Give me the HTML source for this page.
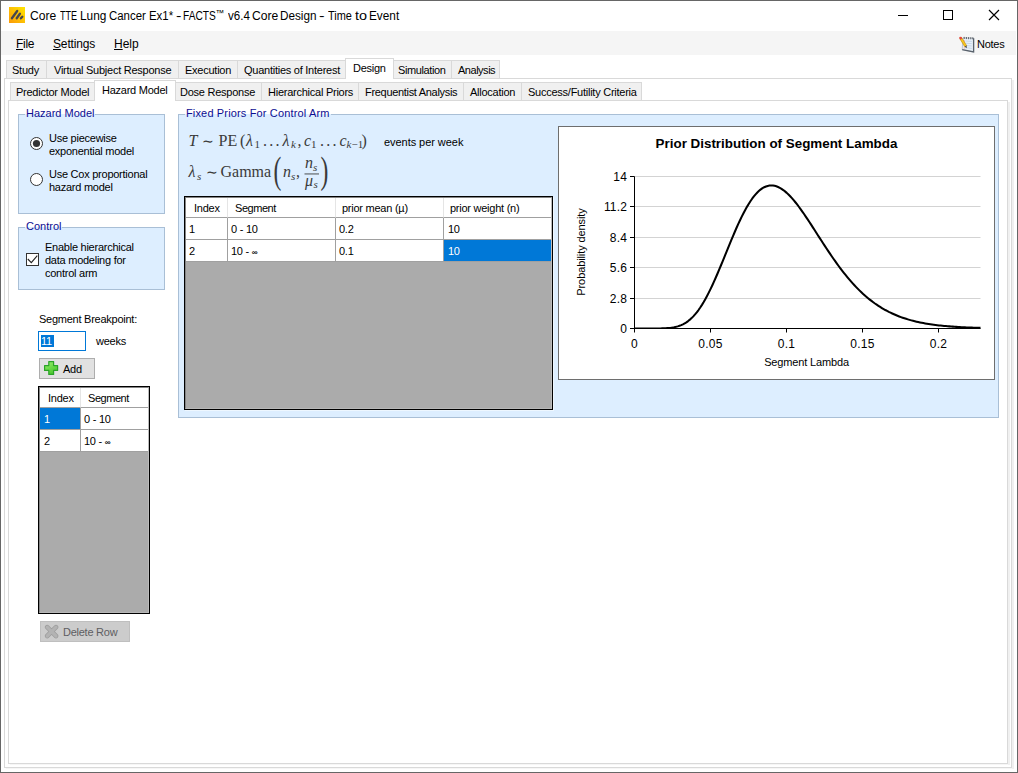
<!DOCTYPE html>
<html><head><meta charset="utf-8"><title>FACTS</title>
<style>
html,body{margin:0;padding:0;}
body{width:1018px;height:773px;position:relative;overflow:hidden;background:#fff;font-family:"Liberation Sans",sans-serif;font-size:11px;color:#000;letter-spacing:-0.25px;}
.a{position:absolute;white-space:nowrap;line-height:13px;}
.t{margin-top:1px;}
.box{position:absolute;box-sizing:border-box;}
.tab{position:absolute;box-sizing:border-box;background:#f0f0f0;border:1px solid #d9d9d9;border-bottom:none;height:18px;line-height:19px;text-align:left;white-space:nowrap;}
.tab.sel{background:#fff;height:21px;}
.grp{position:absolute;box-sizing:border-box;background:#ddeeff;border:1px solid #a9bfd6;}
.grpl{letter-spacing:0;position:absolute;margin-top:1px;background:linear-gradient(#fff 0,#fff 7px,#ddeeff 7px);color:#0d0d92;padding:0 1px;line-height:13px;white-space:nowrap;}
.seg{font-family:"Liberation Sans",sans-serif;font-size:12px;letter-spacing:-0.3px;}
.w{position:absolute;white-space:nowrap;line-height:16px;transform-origin:0 0;letter-spacing:0;display:inline-block;}
.cell{position:absolute;box-sizing:border-box;background:#fff;line-height:13px;white-space:nowrap;}
</style></head>
<body>
<!-- window border -->
<div class="box" style="left:0;top:0;width:1018px;height:773px;border:1px solid #666;"></div>

<!-- title bar -->
<svg class="a" style="left:9px;top:7px" width="16" height="16" viewBox="0 0 16 16">
<defs><linearGradient id="ig" x1="1" y1="0" x2="0" y2="1"><stop offset="0" stop-color="#ffe600"/><stop offset="1" stop-color="#fb9a08"/></linearGradient></defs>
<rect width="16" height="16" fill="url(#ig)"/>
<g stroke="#46464f" stroke-width="2.3" stroke-linecap="round"><line x1="2.9" y1="11.2" x2="8.2" y2="4"/><line x1="7.7" y1="11.2" x2="10.9" y2="6.8"/><line x1="11.9" y1="11.3" x2="13.3" y2="9.8"/></g>
</svg>
<div class="seg" id="title">
<span class="w" style="left:29.59px;top:8px;transform:scaleX(1.0083);">Core</span>
<span class="w" style="left:59.80px;top:8px;transform:scaleX(0.7545);">TTE</span>
<span class="w" style="left:79.51px;top:8px;transform:scaleX(0.9880);">Lung</span>
<span class="w" style="left:108.95px;top:8px;transform:scaleX(0.9526);">Cancer</span>
<span class="w" style="left:148.85px;top:8px;transform:scaleX(0.9500);">Ex1*</span>
<span class="w" style="left:175.6px;top:8px;transform:scaleX(1.35);">-</span>
<span class="w" style="left:182.75px;top:8px;transform:scaleX(0.8459);">FACTS</span>
<span class="w" style="left:228.30px;top:8px;transform:scaleX(0.9636);">v6.4</span>
<span class="w" style="left:252.0px;top:8px;transform:scaleX(1.0100);">Core</span>
<span class="w" style="left:279.52px;top:8px;transform:scaleX(0.9778);">Design</span>
<span class="w" style="left:319.1px;top:8px;transform:scaleX(1.4);">-</span>
<span class="w" style="left:327.50px;top:8px;transform:scaleX(0.9115);">Time</span>
<span class="w" style="left:355px;top:8px;transform:scaleX(1.2);">to</span>
<span class="w" style="left:369.32px;top:8px;transform:scaleX(0.9828);">Event</span>
<span class="w" style="left:215.5px;top:5px;font-size:8.5px;letter-spacing:0;">™</span>
</div>
<svg class="a" style="left:890px;top:1px" width="126" height="30" viewBox="0 0 126 30" fill="none" stroke="#000" stroke-width="1">
<line x1="8" y1="14.5" x2="18" y2="14.5"/>
<rect x="53.5" y="9.5" width="9" height="9"/>
<path d="M99 9 L109 19 M109 9 L99 19" stroke-width="1.15"/>
</svg>

<!-- menu bar -->
<div class="box" style="left:1px;top:31px;width:1015px;height:24px;background:#f5f5f5;"></div>
<div class="a seg" style="left:16px;top:36px;line-height:16px;"><u>F</u>ile</div>
<div class="a seg" style="left:53px;top:36px;line-height:16px;letter-spacing:-0.15px;"><u>S</u>ettings</div>
<div class="a seg" style="left:114px;top:36px;line-height:16px;letter-spacing:0;"><u>H</u>elp</div>
<svg class="a" style="left:958px;top:36px" width="18" height="18" viewBox="0 0 18 18">
<path d="M5 1.8 L15.6 2.2 L15.6 16 L4.2 13.6 Z" fill="#e9f0f7" stroke="#aab4be" stroke-width="0.7"/>
<path d="M15.6 2.2 L15.6 16 L4.2 13.6" fill="none" stroke="#59626c" stroke-width="1.3"/>
<path d="M7.6 5 L13.8 5.4 M7.5 7.2 L13.8 7.7 M7.4 9.4 L13.8 10 M7.3 11.6 L13.8 12.4" stroke="#bcd0e6" stroke-width="0.8"/>
<path d="M6.2 0.9 V3 M8.4 1 V3.1 M10.6 1.1 V3.2 M12.8 1.2 V3.3 M14.8 1.3 V3.3" stroke="#5a5f66" stroke-width="1"/>
<path d="M6.6 4 L6.2 13.2" stroke="#e9a0a0" stroke-width="0.6"/>
<path d="M2 3 L3.9 1.9 L8.6 9.6 L6.8 10.8 Z" fill="#fbc81a" stroke="#b8860b" stroke-width="0.6"/>
<circle cx="2.6" cy="2.1" r="1.45" fill="#e0483a"/>
<path d="M6.8 10.8 L8.6 9.6 L8.7 12.2 Z" fill="#3a3a3a"/>
</svg>
<div class="a" style="left:977px;top:38px;">Notes</div>

<!-- outer tab control -->
<div class="box" style="left:4px;top:78px;width:1008px;height:690px;border:1px solid #d9d9d9;"></div>
<div class="box" style="left:1012px;top:80px;width:2px;height:689px;background:#f0f0f0;"></div>
<div class="box" style="left:6px;top:768px;width:1006px;height:1px;background:#f6f6f6;"></div>
<div class="tab" style="left:6px;top:60px;width:41px;padding-left:5px;">Study</div>
<div class="tab" style="left:46px;top:60px;width:133px;padding-left:7px;">Virtual Subject Response</div>
<div class="tab" style="left:178px;top:60px;width:60px;padding-left:6px;">Execution</div>
<div class="tab" style="left:237px;top:60px;width:110px;padding-left:6px;">Quantities of Interest</div>
<div class="tab" style="left:393px;top:60px;width:59px;padding-left:4px;letter-spacing:-0.4px;">Simulation</div>
<div class="tab" style="left:451px;top:60px;width:49px;padding-left:6px;border-right:1px solid #d9d9d9;letter-spacing:-0.48px;">Analysis</div>
<div class="tab sel" style="left:345px;top:58px;width:49px;padding-left:7px;line-height:18px;">Design</div>

<!-- inner tab control -->
<div class="box" style="left:8px;top:100px;width:1000px;height:664px;border:1px solid #d9d9d9;"></div>
<div class="box" style="left:1008px;top:102px;width:2px;height:663px;background:#f0f0f0;"></div>
<div class="box" style="left:10px;top:764px;width:998px;height:1px;background:#f6f6f6;"></div>
<div class="tab" style="left:10px;top:82px;width:86px;padding-left:5px;">Predictor Model</div>
<div class="tab" style="left:174px;top:82px;width:88px;padding-left:5px;">Dose Response</div>
<div class="tab" style="left:261px;top:82px;width:98px;padding-left:6px;">Hierarchical Priors</div>
<div class="tab" style="left:358px;top:82px;width:106px;padding-left:6px;letter-spacing:-0.31px;">Frequentist Analysis</div>
<div class="tab" style="left:463px;top:82px;width:59px;padding-left:6px;">Allocation</div>
<div class="tab" style="left:521px;top:82px;width:121px;padding-left:6px;border-right:1px solid #d9d9d9;">Success/Futility Criteria</div>
<div class="tab sel" style="left:94px;top:80px;width:82px;padding-left:7px;line-height:18px;">Hazard Model</div>

<!-- Hazard Model group -->
<div class="grp" style="left:18px;top:114px;width:147px;height:100px;"></div>
<div class="grpl" style="left:25px;top:106px;">Hazard Model</div>
<svg class="a" style="left:29px;top:136px" width="15" height="15"><circle cx="7.5" cy="7.5" r="6" fill="#fff" stroke="#333" stroke-width="1"/><circle cx="7.5" cy="7.5" r="3.6" fill="#333"/></svg>
<div class="a t" style="left:49px;top:131px;">Use piecewise<br>exponential model</div>
<svg class="a" style="left:29px;top:172px" width="15" height="15"><circle cx="7.5" cy="7.5" r="6" fill="#fff" stroke="#333" stroke-width="1"/></svg>
<div class="a t" style="left:49px;top:167px;">Use Cox proportional<br>hazard model</div>

<!-- Control group -->
<div class="grp" style="left:18px;top:227px;width:147px;height:63px;"></div>
<div class="grpl" style="left:25px;top:219px;">Control</div>
<div class="box" style="left:26px;top:253px;width:13px;height:13px;background:#fff;border:1px solid #333;"></div>
<svg class="a" style="left:26px;top:253px" width="13" height="13" fill="none" stroke="#222" stroke-width="1.1"><path d="M1.8 6 L5.3 9.6 L11.3 2.6"/></svg>
<div class="a t" style="left:45px;top:240px;">Enable hierarchical<br>data modeling for<br>control arm</div>

<!-- Segment Breakpoint -->
<div class="a t" style="left:39px;top:312px;">Segment Breakpoint:</div>
<div class="box" style="left:38px;top:331px;width:48px;height:20px;background:#fff;border:1px solid #0078d7;"></div>
<div class="a" style="left:41px;top:335px;width:12.5px;height:12px;background:#0078d7;color:#fff;box-sizing:border-box;line-height:13px;">11</div>
<div class="a t" style="left:96px;top:334px;">weeks</div>

<!-- Add button -->
<div class="box" style="left:39px;top:358px;width:56px;height:21px;background:#e1e1e1;border:1px solid #adadad;"></div>
<svg class="a" style="left:44px;top:361px" width="15" height="15" viewBox="0 0 15 15">
<defs><linearGradient id="pg" x1="0" y1="0" x2="0.6" y2="1"><stop offset="0" stop-color="#a4f07c"/><stop offset="0.5" stop-color="#6fdc4a"/><stop offset="1" stop-color="#48c62e"/></linearGradient></defs>
<path d="M4.8 0.6 H9.6 V4.6 H13.6 V9.4 H9.6 V13.4 H4.8 V9.4 H0.6 V4.6 H4.8 Z" fill="url(#pg)" stroke="#2ba328" stroke-width="1.2" stroke-linejoin="round"/>
</svg>
<div class="a t" style="left:63px;top:362px;">Add</div>

<!-- small grid -->
<div class="box" style="left:38px;top:386px;width:112px;height:228px;background:#ababab;border:1px solid #000;"></div>
<div class="box" style="left:39px;top:387px;width:110px;height:226px;border:1px solid;border-color:#858585 #bcbcbc #b8b8b8 #858585;"></div>
<div class="cell" style="left:40px;top:388px;width:41px;height:20px;border-right:1px solid #e5e5e5;border-bottom:1px solid #a0a0a0;padding:4px 0 0 8px;">Index</div>
<div class="cell" style="left:81px;top:388px;width:67px;height:20px;border-bottom:1px solid #a0a0a0;padding:4px 0 0 7px;letter-spacing:-0.45px;">Segment</div>
<div class="cell" style="left:40px;top:408px;width:41px;height:22px;border-right:1px solid #a0a0a0;border-bottom:1px solid #a0a0a0;padding:5px 0 0 4px;background:#0078d7;color:#fff;background-clip:padding-box;">1</div>
<div class="cell" style="left:81px;top:408px;width:67px;height:22px;border-bottom:1px solid #a0a0a0;padding:5px 0 0 3px;">0 - 10</div>
<div class="cell" style="left:40px;top:430px;width:41px;height:22px;border-right:1px solid #a0a0a0;border-bottom:1px solid #a0a0a0;padding:5px 0 0 4px;">2</div>
<div class="cell" style="left:81px;top:430px;width:67px;height:22px;border-bottom:1px solid #a0a0a0;padding:5px 0 0 3px;">10 - <span style="font-size:8px;font-weight:bold;letter-spacing:0">∞</span></div>

<!-- Delete Row button -->
<div class="box" style="left:40px;top:621px;width:90px;height:21px;background:#cccccc;border:1px solid #bfbfbf;"></div>
<svg class="a" style="left:44px;top:624px" width="16" height="16" viewBox="0 0 16 16" stroke-linecap="round">
<path d="M3.2 3.2 L12 12 M12 3.2 L3.2 12" stroke="#9c9c9c" stroke-width="4.6"/>
<path d="M3.2 3.2 L12 12 M12 3.2 L3.2 12" stroke="#b3b3b3" stroke-width="3.2"/>
</svg>
<div class="a t" style="left:63px;top:625px;color:#5e5e62;">Delete Row</div>

<!-- Fixed Priors group -->
<div class="grp" style="left:178px;top:114px;width:821px;height:304px;"></div>
<div class="grpl" style="left:185px;top:106px;letter-spacing:0.15px;">Fixed Priors For Control Arm</div>

<!-- formulas -->
<svg class="a" style="left:184px;top:126px" width="200" height="70" viewBox="0 0 200 70" fill="#3a3a3a" font-family="'Liberation Serif',serif" font-size="16" letter-spacing="0">
<text x="4.5" y="19.6" font-style="italic">T</text>
<text x="18" y="19.6" font-size="14">∼</text>
<text x="34.5" y="19.6">PE</text>
<text x="56" y="19.6">(</text>
<text x="62" y="19.6" font-style="italic">λ</text><text x="70.5" y="22" font-size="11">1</text>
<text x="79" y="19.6" letter-spacing="2.3">...</text>
<text x="98.5" y="19.6" font-style="italic">λ</text><text x="107" y="22" font-size="11" font-style="italic">k</text>
<text x="113.5" y="19.6">,</text>
<text x="120" y="19.6" font-style="italic">c</text><text x="127" y="22" font-size="11">1</text>
<text x="136" y="19.6" letter-spacing="2.3">...</text>
<text x="155.5" y="19.6" font-style="italic">c</text><text x="162.5" y="22" font-size="11" font-style="italic">k</text><text x="167.5" y="22" font-size="11">−1</text>
<text x="177.5" y="19.6">)</text>
<text x="4.5" y="51" font-style="italic">λ</text><text x="13" y="53.5" font-size="11" font-style="italic">s</text>
<text x="22" y="51" font-size="14">∼</text>
<text x="36.5" y="51">Gamma</text>
<text transform="translate(89.5,56.7) scale(0.62,1)" x="0" y="0" font-size="38">(</text>
<text x="99" y="51" font-style="italic">n</text><text x="107" y="53.5" font-size="11" font-style="italic">s</text>
<text x="112" y="51">,</text>
<text x="121" y="42" font-style="italic">n</text><text x="129" y="44.5" font-size="11" font-style="italic">s</text>
<rect x="120.5" y="47.5" width="14.5" height="0.9"/>
<text x="121" y="59.5" font-style="italic">μ</text><text x="129.5" y="62" font-size="11" font-style="italic">s</text>
<text transform="translate(136.5,56.7) scale(0.62,1)" x="0" y="0" font-size="38">)</text>
</svg>
<div class="a t" style="left:384px;top:135px;letter-spacing:-0.05px;">events per week</div>

<!-- main grid -->
<div class="box" style="left:184px;top:196px;width:369px;height:214px;background:#ababab;border:1px solid #000;"></div>
<div class="box" style="left:185px;top:197px;width:367px;height:212px;border:1px solid;border-color:#858585 #bcbcbc #b8b8b8 #858585;"></div>
<div class="box" style="left:553px;top:197px;width:1px;height:214px;background:#eef7ff;"></div>
<div class="box" style="left:185px;top:410px;width:369px;height:1px;background:#eef7ff;"></div>
<div class="cell" style="left:186px;top:198px;width:42px;height:20px;border-right:1px solid #e5e5e5;border-bottom:1px solid #a0a0a0;padding:4px 0 0 8px;">Index</div>
<div class="cell" style="left:228px;top:198px;width:108px;height:20px;border-right:1px solid #e5e5e5;border-bottom:1px solid #a0a0a0;padding:4px 0 0 7px;letter-spacing:-0.45px;">Segment</div>
<div class="cell" style="left:336px;top:198px;width:108px;height:20px;border-right:1px solid #e5e5e5;border-bottom:1px solid #a0a0a0;padding:4px 0 0 6px;">prior mean (µ)</div>
<div class="cell" style="left:444px;top:198px;width:107px;height:20px;border-bottom:1px solid #a0a0a0;padding:4px 0 0 6px;">prior weight (n)</div>

<div class="cell" style="left:186px;top:218px;width:42px;height:22px;border-right:1px solid #a0a0a0;border-bottom:1px solid #a0a0a0;padding:5px 0 0 3px;">1</div>
<div class="cell" style="left:228px;top:218px;width:108px;height:22px;border-right:1px solid #a0a0a0;border-bottom:1px solid #a0a0a0;padding:5px 0 0 3px;">0 - 10</div>
<div class="cell" style="left:336px;top:218px;width:108px;height:22px;border-right:1px solid #a0a0a0;border-bottom:1px solid #a0a0a0;padding:5px 0 0 3px;">0.2</div>
<div class="cell" style="left:444px;top:218px;width:107px;height:22px;border-bottom:1px solid #a0a0a0;padding:5px 0 0 4px;">10</div>

<div class="cell" style="left:186px;top:240px;width:42px;height:22px;border-right:1px solid #a0a0a0;border-bottom:1px solid #a0a0a0;padding:5px 0 0 3px;">2</div>
<div class="cell" style="left:228px;top:240px;width:108px;height:22px;border-right:1px solid #a0a0a0;border-bottom:1px solid #a0a0a0;padding:5px 0 0 3px;">10 - <span style="font-size:8px;font-weight:bold;letter-spacing:0">∞</span></div>
<div class="cell" style="left:336px;top:240px;width:108px;height:22px;border-right:1px solid #a0a0a0;border-bottom:1px solid #a0a0a0;padding:5px 0 0 3px;">0.1</div>
<div class="cell" style="left:444px;top:240px;width:107px;height:22px;border-bottom:1px solid #a0a0a0;padding:5px 0 0 4px;background:#0078d7;color:#fff;background-clip:padding-box;">10</div>

<!-- chart -->
<div class="box" style="left:558px;top:126px;width:437px;height:254px;background:#fff;border:1px solid #6e6e6e;"></div>
<svg class="a" id="chart" style="left:558px;top:126px" width="437" height="254" viewBox="558 126 437 254" font-family="'Liberation Sans',sans-serif" font-size="12">
<line x1="634.5" y1="298.5" x2="980.5" y2="298.5" stroke="#d3d3d3" stroke-width="1"/>
<line x1="634.5" y1="267.5" x2="980.5" y2="267.5" stroke="#d3d3d3" stroke-width="1"/>
<line x1="634.5" y1="237.5" x2="980.5" y2="237.5" stroke="#d3d3d3" stroke-width="1"/>
<line x1="634.5" y1="206.5" x2="980.5" y2="206.5" stroke="#d3d3d3" stroke-width="1"/>
<line x1="634.5" y1="176.5" x2="980.5" y2="176.5" stroke="#d3d3d3" stroke-width="1"/>
<line x1="634.5" y1="176.5" x2="634.5" y2="329.0" stroke="#000" stroke-width="1"/>
<line x1="634.0" y1="328.5" x2="980.5" y2="328.5" stroke="#000" stroke-width="1"/>
<line x1="630.0" y1="328.5" x2="634.5" y2="328.5" stroke="#000" stroke-width="1"/>
<text x="627.0" y="332.5" text-anchor="end" letter-spacing="0.15">0</text>
<line x1="630.0" y1="298.5" x2="634.5" y2="298.5" stroke="#000" stroke-width="1"/>
<text x="627.0" y="302.5" text-anchor="end" letter-spacing="0.15">2.8</text>
<line x1="630.0" y1="267.5" x2="634.5" y2="267.5" stroke="#000" stroke-width="1"/>
<text x="627.0" y="271.5" text-anchor="end" letter-spacing="0.15">5.6</text>
<line x1="630.0" y1="237.5" x2="634.5" y2="237.5" stroke="#000" stroke-width="1"/>
<text x="627.0" y="241.5" text-anchor="end" letter-spacing="0.15">8.4</text>
<line x1="630.0" y1="206.5" x2="634.5" y2="206.5" stroke="#000" stroke-width="1"/>
<text x="627.0" y="210.5" text-anchor="end" letter-spacing="0.15">11.2</text>
<line x1="630.0" y1="176.5" x2="634.5" y2="176.5" stroke="#000" stroke-width="1"/>
<text x="627.0" y="180.5" text-anchor="end" letter-spacing="0.15">14</text>
<line x1="634.5" y1="328.5" x2="634.5" y2="332.5" stroke="#000" stroke-width="1"/>
<text x="634.5" y="347.5" text-anchor="middle" letter-spacing="0.3">0</text>
<line x1="710.5" y1="328.5" x2="710.5" y2="332.5" stroke="#000" stroke-width="1"/>
<text x="710.5" y="347.5" text-anchor="middle" letter-spacing="0.3">0.05</text>
<line x1="786.5" y1="328.5" x2="786.5" y2="332.5" stroke="#000" stroke-width="1"/>
<text x="786.5" y="347.5" text-anchor="middle" letter-spacing="0.3">0.1</text>
<line x1="862.5" y1="328.5" x2="862.5" y2="332.5" stroke="#000" stroke-width="1"/>
<text x="862.5" y="347.5" text-anchor="middle" letter-spacing="0.3">0.15</text>
<line x1="938.5" y1="328.5" x2="938.5" y2="332.5" stroke="#000" stroke-width="1"/>
<text x="938.5" y="347.5" text-anchor="middle" letter-spacing="0.3">0.2</text>
<clipPath id="cp"><rect x="634.5" y="170" width="347.0" height="158.7"/></clipPath>
<polyline clip-path="url(#cp)" fill="none" stroke="#000" stroke-width="2.05" stroke-linejoin="round" points="634.50,328.50 636.23,328.50 637.96,328.50 639.69,328.50 641.42,328.50 643.15,328.50 644.88,328.50 646.61,328.50 648.34,328.50 650.07,328.50 651.80,328.50 653.53,328.49 655.26,328.49 656.99,328.48 658.72,328.46 660.45,328.43 662.18,328.39 663.91,328.34 665.64,328.25 667.37,328.14 669.10,328.00 670.83,327.80 672.56,327.55 674.29,327.24 676.02,326.85 677.75,326.37 679.48,325.80 681.21,325.12 682.94,324.31 684.67,323.37 686.40,322.29 688.13,321.06 689.86,319.66 691.59,318.10 693.32,316.35 695.05,314.43 696.78,312.32 698.51,310.02 700.24,307.53 701.97,304.86 703.70,302.01 705.43,298.97 707.16,295.77 708.89,292.40 710.62,288.88 712.35,285.21 714.08,281.42 715.81,277.51 717.54,273.50 719.27,269.41 721.00,265.25 722.73,261.05 724.46,256.81 726.19,252.56 727.92,248.31 729.65,244.09 731.38,239.90 733.11,235.78 734.84,231.74 736.57,227.78 738.30,223.94 740.03,220.22 741.76,216.64 743.49,213.21 745.22,209.95 746.95,206.86 748.68,203.96 750.41,201.25 752.14,198.74 753.87,196.44 755.60,194.35 757.33,192.48 759.06,190.83 760.79,189.40 762.52,188.20 764.25,187.21 765.98,186.45 767.71,185.90 769.44,185.57 771.17,185.45 772.90,185.54 774.63,185.83 776.36,186.31 778.09,186.98 779.82,187.83 781.55,188.85 783.28,190.04 785.01,191.39 786.74,192.88 788.47,194.52 790.20,196.28 791.93,198.17 793.66,200.16 795.39,202.27 797.12,204.46 798.85,206.75 800.58,209.11 802.31,211.54 804.04,214.02 805.77,216.57 807.50,219.15 809.23,221.77 810.96,224.42 812.69,227.09 814.42,229.78 816.15,232.48 817.88,235.18 819.61,237.87 821.34,240.56 823.07,243.23 824.80,245.89 826.53,248.52 828.26,251.12 829.99,253.69 831.72,256.23 833.45,258.73 835.18,261.19 836.91,263.61 838.64,265.98 840.37,268.30 842.10,270.58 843.83,272.80 845.56,274.97 847.29,277.09 849.02,279.15 850.75,281.16 852.48,283.11 854.21,285.00 855.94,286.84 857.67,288.63 859.40,290.36 861.13,292.03 862.86,293.65 864.59,295.21 866.32,296.72 868.05,298.18 869.78,299.58 871.51,300.93 873.24,302.23 874.97,303.49 876.70,304.69 878.43,305.84 880.16,306.95 881.89,308.02 883.62,309.04 885.35,310.02 887.08,310.95 888.81,311.85 890.54,312.70 892.27,313.52 894.00,314.30 895.73,315.05 897.46,315.76 899.19,316.44 900.92,317.09 902.65,317.71 904.38,318.29 906.11,318.85 907.84,319.38 909.57,319.89 911.30,320.37 913.03,320.83 914.76,321.26 916.49,321.67 918.22,322.06 919.95,322.43 921.68,322.78 923.41,323.11 925.14,323.43 926.87,323.72 928.60,324.00 930.33,324.27 932.06,324.52 933.79,324.76 935.52,324.98 937.25,325.20 938.98,325.40 940.71,325.59 942.44,325.76 944.17,325.93 945.90,326.09 947.63,326.24 949.36,326.38 951.09,326.51 952.82,326.64 954.55,326.75 956.28,326.87 958.01,326.97 959.74,327.07 961.47,327.16 963.20,327.24 964.93,327.33 966.66,327.40 968.39,327.47 970.12,327.54 971.85,327.60 973.58,327.66 975.31,327.72 977.04,327.77 978.77,327.82 980.50,327.86"/>
<text x="776.5" y="148" text-anchor="middle" font-weight="bold" font-size="13.4" letter-spacing="0">Prior Distribution of Segment Lambda</text>
<text x="806.5" y="365.6" text-anchor="middle" font-size="11" letter-spacing="-0.15">Segment Lambda</text>
<text transform="translate(584.5,252) rotate(-90)" text-anchor="middle" font-size="11" letter-spacing="-0.1">Probability density</text>
</svg>
</body></html>
